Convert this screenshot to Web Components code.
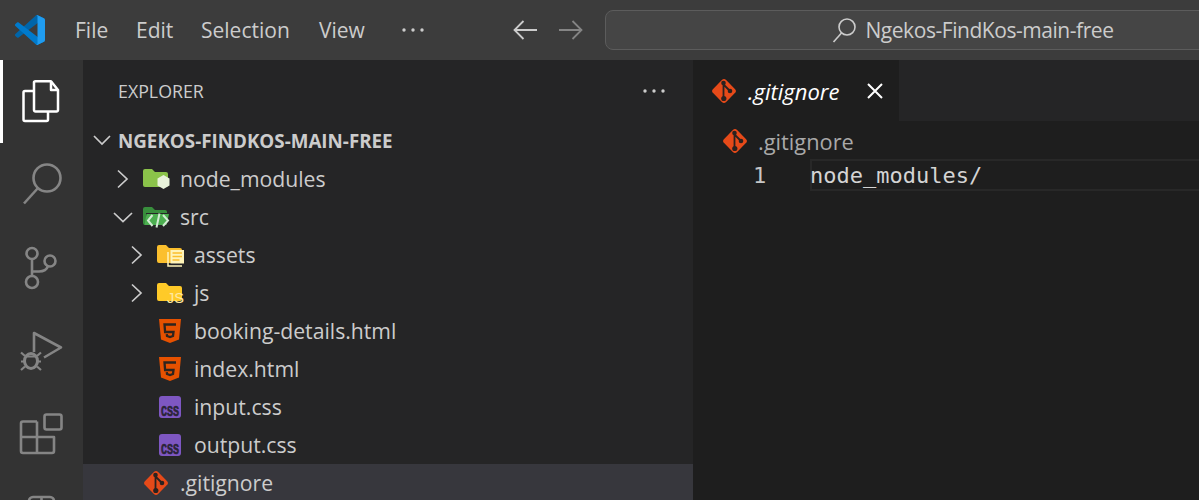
<!DOCTYPE html>
<html>
<head>
<meta charset="utf-8">
<title>Ngekos-FindKos-main-free</title>
<style>
    html, body { margin: 0; height: 500px; overflow: hidden; background: #1e1e1e; }
    body { font-family: "Open Sans", "Liberation Sans", sans-serif; }
</style>
</head>
<body>
<vs-window>
    <vs-titlebar slot="title"></vs-titlebar>
    <vs-activitybar slot="activity"></vs-activitybar>
    <vs-sidebar slot="side">
        <vs-tree-row depth="1" twistie="right" icon="node">node_modules</vs-tree-row>
        <vs-tree-row depth="1" twistie="down" icon="src">src</vs-tree-row>
        <vs-tree-row depth="2" twistie="right" icon="assets">assets</vs-tree-row>
        <vs-tree-row depth="2" twistie="right" icon="js">js</vs-tree-row>
        <vs-tree-row depth="2" icon="html">booking-details.html</vs-tree-row>
        <vs-tree-row depth="2" icon="html">index.html</vs-tree-row>
        <vs-tree-row depth="2" icon="css">input.css</vs-tree-row>
        <vs-tree-row depth="2" icon="css">output.css</vs-tree-row>
        <vs-tree-row depth="1" icon="git" active>.gitignore</vs-tree-row>
    </vs-sidebar>
    <vs-editor slot="editor"></vs-editor>
</vs-window>

<script>
const FOLDER = 'M0 5a2 2 0 0 1 2-2h7l3 3h11a2 2 0 0 1 2 2v11a2 2 0 0 1-2 2H2a2 2 0 0 1-2-2z';

const FILE_ICONS = {
    node: `<path d="${FOLDER}" fill="#8bc34a"/><path d="M20.500 9l6 3.500v7l-6 3.500-6-3.500v-7z" fill="#e8f2da"/>`,
    src: `<path d="M0 5a2 2 0 0 1 2-2h7l3 3h10a2 2 0 0 1 2 2v1H3v12H2a2 2 0 0 1-2-2z" fill="#388e3c"/>
        <path d="M3.500 10H26l-2.500 11H1.500z" fill="#4caf50"/>
        <path d="M9.500 11l-4.500 5.500 4.500 5.500M20 11l5 5.500-5 5.500M16.500 9.500l-3 14" fill="none" stroke="#d3ecd4" stroke-width="2"/>`,
    assets: `<path d="${FOLDER}" fill="#fbbf2d"/>
        <path d="M11 10v14h14" fill="none" stroke="#fff3b8" stroke-width="1.500"/>
        <rect x="13.500" y="8" width="13.500" height="13.500" fill="#fff3b8"/>
        <path d="M15.500 11h9.500M15.500 14.500h9.500M15.500 18h7" stroke="#fbbf2d" stroke-width="1.500"/>`,
    js: `<path d="${FOLDER}" fill="#ffca28"/>
        <text x="10" y="23" font-family="Liberation Sans, sans-serif" font-size="14.500" fill="#ffe9a0">JS</text>`,
    html: `<path d="M2 1h22l-2 20.500L13 25l-9-3.500z" fill="#e65100"/>
        <path d="M19 6.500H7.500l.6 7.500h8.400l-.5 4-3 1-3-1-.2-1.800" fill="none" stroke="#2e241e" stroke-width="2.300"/>`,
    css: `<rect x="2" y="2" width="22" height="22" rx="3" fill="#7e57c2"/>
        <text x="13" y="21.500" text-anchor="middle" font-family="Liberation Mono, monospace" font-weight="700" font-size="14" textLength="18" lengthAdjust="spacingAndGlyphs" fill="#2a2438" stroke="#2a2438" stroke-width=".600">CSS</text>`,
    git: `<rect x="3.800" y="3.800" width="18.400" height="18.400" rx="3" transform="rotate(45 13 13)" fill="#e64a19"/>
        <path d="M12.500 5v15.500M12.500 6.500 19 13" fill="none" stroke="#2a2220" stroke-width="1.800"/>
        <circle cx="12.500" cy="5" r="2.300" fill="#2a2220"/><circle cx="19" cy="13" r="2.300" fill="#2a2220"/><circle cx="12.800" cy="20.500" r="2.600" fill="#2a2220"/>`
};

const fileIcon = name => `<svg width="26" height="26" viewBox="0 0 26 26" style="overflow:visible" aria-hidden="true">${FILE_ICONS[name]}</svg>`;
const dots = `<svg width="24" height="6" viewBox="0 0 24 6"><circle cx="3" cy="3" r="1.700" fill="#ccc"/><circle cx="12" cy="3" r="1.700" fill="#ccc"/><circle cx="21" cy="3" r="1.700" fill="#ccc"/></svg>`;

class VsWindow extends HTMLElement {
    constructor() {
        super();
        this.attachShadow({ mode: 'open' });
        this.shadowRoot.innerHTML = `
        <style>
            :host {
                display: grid;
                grid-template-columns: 83px 610px 1fr;
                grid-template-rows: 60px 440px;
                width: 1199px;
                height: 500px;
                overflow: hidden;
            }
            .title { grid-column: 1 / -1; min-width: 0; overflow: hidden; display: flex; }
        </style>
        <div class="title"><slot name="title"></slot></div>
        <slot name="activity"></slot>
        <slot name="side"></slot>
        <slot name="editor"></slot>
        `;
    }
}

class VsTitlebar extends HTMLElement {
    constructor() {
        super();
        this.attachShadow({ mode: 'open' });
        this.shadowRoot.innerHTML = `
        <style>
            :host {
                display: flex;
                align-items: center;
                flex: none;
                width: 1199px;
                height: 60px;
                background: #3c3c3c;
                color: #cccccc;
                font-size: 21px;
            }
            .logo { flex: none; width: 30px; height: 30px; margin-left: 15px; }
            nav { display: flex; margin-left: 30px; width: 326px; flex: none; align-items: center; }
            nav span { flex: none; }
            .file { width: 61px; } .edit { width: 65px; } .sel { width: 118px; } .view { width: 82px; }
            .more { display: flex; margin-top: -1px; }
            .arrows { display: flex; gap: 22px; margin-left: 112px; flex: none; }
            .box {
                flex: none;
                display: flex;
                align-items: center;
                justify-content: center;
                gap: 9px;
                box-sizing: border-box;
                width: 736px;
                height: 40px;
                margin-left: 22px;
                background: #454545;
                border: 1px solid #5c5c5c;
                border-radius: 8px;
                color: #cccccc;
                letter-spacing: -0.45px;
            }
        </style>
        <svg class="logo" viewBox="0 0 100 100">
            <path fill="#0065a9" d="M96.400 10.800 75.800.9c-2.400-1.100-5.200-.6-7.100 1.200L1.300 63.700c-1.800 1.700-1.800 4.500 0 6.200l5.500 5c1.500 1.300 3.700 1.400 5.300.2L93.300 13.600c2.700-2 6.700-.1 6.700 3.300v-.2c0-2.400-1.400-4.700-3.600-5.900z"/>
            <path fill="#007acc" d="M96.400 89.200 75.800 99.100c-2.400 1.100-5.200.6-7.100-1.200L1.300 36.300c-1.800-1.700-1.800-4.500 0-6.200l5.500-5c1.500-1.300 3.700-1.400 5.300-.2l81.200 61.600c2.700 2 6.700.1 6.700-3.300v.2c0 2.400-1.400 4.700-3.600 5.900z"/>
            <path fill="#1f9cf0" d="M75.800 99.100c-2.400 1.200-5.200.7-7.100-1.200 2.300 2.300 6.300.7 6.300-2.600V4.700c0-3.300-4-4.900-6.300-2.600 1.900-1.900 4.700-2.400 7.100-1.200l20.600 9.900c2.200 1 3.600 3.200 3.600 5.600v67.200c0 2.400-1.400 4.600-3.600 5.600z"/>
        </svg>
        <nav>
            <span class="file">File</span><span class="edit">Edit</span><span class="sel">Selection</span><span class="view">View</span>
            <span class="more">${dots}</span>
        </nav>
        <div class="arrows">
            <svg width="24" height="20" viewBox="0 0 24 20" fill="none" stroke="#cccccc" stroke-width="1.800"><path d="M1 10h23M10.500 1 1.500 10l9 9"/></svg>
            <svg width="24" height="20" viewBox="0 0 24 20" fill="none" stroke="#858585" stroke-width="1.800"><path d="M23 10H0M13.500 1l9 9-9 9"/></svg>
        </div>
        <div class="box">
            <svg width="24" height="26" viewBox="0 0 24 26" fill="none" stroke="#cccccc" stroke-width="1.600"><circle cx="15" cy="10" r="8"/><path d="M9.500 16 1.500 25"/></svg>
            <span>Ngekos-FindKos-main-free</span>
        </div>
        `;
    }
}

class VsActivitybar extends HTMLElement {
    constructor() {
        super();
        this.attachShadow({ mode: 'open' });
        const stroke = 'fill="none" stroke="#858585" stroke-width="2.600" stroke-linejoin="round"';
        this.shadowRoot.innerHTML = `
        <style>
            :host {
                display: flex;
                flex-direction: column;
                height: 440px;
                background: #333333;
                overflow: hidden;
            }
            svg { flex: none; display: block; width: 83px; height: 83px; }
            .on { box-shadow: inset 3px 0 0 #ffffff; }
        </style>
        <svg class="on" viewBox="0 0 83 83" fill="none" stroke="#ffffff" stroke-width="2.500" stroke-linejoin="round">
            <path d="M34 22V50a1.500 1.500 0 0 0 1.500 1.500H56.500A1.500 1.500 0 0 0 58 50V30l-7-8.800H35.500A1.500 1.500 0 0 0 34 22.700z"/>
            <path d="M51 21.200V30h7"/>
            <path d="M33.500 31H25a1.500 1.500 0 0 0-1.500 1.500V59.500A1.500 1.500 0 0 0 25 61H46.500A1.500 1.500 0 0 0 48 59.500V52"/>
        </svg>
        <svg viewBox="0 0 83 83" ${stroke}>
            <circle cx="47" cy="35" r="13.500"/>
            <path d="M38 45 24 60.500"/>
        </svg>
        <svg viewBox="0 0 83 83" ${stroke}>
            <circle cx="32" cy="27.500" r="5.500"/>
            <circle cx="32" cy="56" r="6"/>
            <circle cx="50" cy="35" r="5.500"/>
            <path d="M32 33v17M32 45.500h7c5 0 8-2.500 9-5.500"/>
        </svg>
        <svg viewBox="0 0 83 83" ${stroke}>
            <path d="M34 43V24L61 38.500 44 48.500"/>
            <ellipse cx="31" cy="52" rx="6.500" ry="7.500" stroke-width="3"/>
            <path d="M25 47.500h12M21 43.500l4 3.500M41 43.500l-4 3.500M21 52.500h3M38 52.500h3M21 61l4-3.500M41 61l-4-3.500" stroke-width="2.200"/>
        </svg>
        <svg viewBox="0 0 83 83" ${stroke}>
            <rect x="44.500" y="22.500" width="17" height="15" rx="2"/>
            <path d="M37 29.500H23a2 2 0 0 0-2 2V59a2 2 0 0 0 2 2H52a2 2 0 0 0 2-2V45H21M37 29.500V61"/>
        </svg>
        <svg viewBox="0 0 83 83" ${stroke}>
            <path d="M29 30v-4a4 4 0 0 1 4-4H50a4 4 0 0 1 4 4v4M41.500 22v10"/>
        </svg>
        `;
    }
}

class VsSidebar extends HTMLElement {
    constructor() {
        super();
        this.attachShadow({ mode: 'open' });
        this.shadowRoot.innerHTML = `
        <style>
            :host {
                display: flex;
                flex-direction: column;
                height: 440px;
                background: #252526;
                color: #cccccc;
                overflow: hidden;
            }
            header {
                display: flex;
                align-items: center;
                justify-content: space-between;
                flex: none;
                height: 62px;
                padding: 0 27px 0 35px;
                font-size: 17.800px;
            }
            .root {
                display: flex;
                align-items: center;
                flex: none;
                height: 38px;
                padding-left: 10px;
                gap: 13px;
                font-size: 18.800px;
                font-weight: 700;
            }
            .root svg { margin-top: -2px; }
        </style>
        <header><span>EXPLORER</span>${dots}</header>
        <div class="root">
            <svg width="12" height="18" viewBox="0 0 18 18" style="width:18px;margin-right:-6px" fill="none" stroke="#cccccc" stroke-width="1.700"><path d="M1 5l8 8 8-8"/></svg>
            <span>NGEKOS-FINDKOS-MAIN-FREE</span>
        </div>
        <slot></slot>
        `;
    }
}

class VsTreeRow extends HTMLElement {
    constructor() {
        super();
        this.attachShadow({ mode: 'open' });
        const twistie = this.getAttribute('twistie');
        const depth = Number(this.getAttribute('depth') || 1);
        let chevron = '';
        if (twistie === 'right') {
            chevron = '<path d="M1 .5l9 8.500-9 8.500"/>';
        } else if (twistie === 'down') {
            chevron = '<path d="M-1 5l9 8.500 9-8.500"/>';
        }
        this.shadowRoot.innerHTML = `
        <style>
            :host {
                display: flex;
                align-items: center;
                flex: none;
                box-sizing: border-box;
                height: 38px;
                padding-left: ${24 + (depth - 1) * 14}px;
                font-size: 21.200px;
                color: #cccccc;
            }
            :host([active]) { background: #37373d; }
            .twistie { flex: none; width: 36px; display: flex; padding-left: ${twistie === 'down' ? 8 : 10}px; box-sizing: border-box; }
            .twistie svg { overflow: visible; }
            .icon { flex: none; display: flex; margin-right: 11px; }
            .label { margin-top: -2px; }
        </style>
        <span class="twistie"><svg width="14" height="18" viewBox="0 0 14 18" fill="none" stroke="#cccccc" stroke-width="1.700">${chevron}</svg></span>
        <span class="icon">${fileIcon(this.getAttribute('icon'))}</span>
        <span class="label"><slot></slot></span>
        `;
    }
}

class VsEditor extends HTMLElement {
    constructor() {
        super();
        this.attachShadow({ mode: 'open' });
        this.shadowRoot.innerHTML = `
        <style>
            :host {
                display: flex;
                flex-direction: column;
                height: 440px;
                background: #1e1e1e;
                overflow: hidden;
            }
            .tabs { display: flex; flex: none; height: 61px; background: #252526; }
            .tab {
                display: flex;
                align-items: center;
                box-sizing: border-box;
                width: 206px;
                padding-left: 18px;
                background: #1e1e1e;
                color: #ffffff;
                font-size: 22px;
                font-style: italic;
            }
            .tab .name { margin-left: 11px; width: 119px; flex: none; }
            .tab svg { flex: none; }
            .crumbs {
                display: flex;
                align-items: center;
                flex: none;
                height: 38px;
                margin-top: 1px;
                padding-left: 29px;
                gap: 10px;
                font-size: 21.800px;
                color: #a9a9a9;
            }
            .line { display: flex; flex: none; height: 32px; margin-top: -1px; }
            .num {
                flex: none;
                box-sizing: border-box;
                width: 117px;
                padding-left: 60px;
                color: #c6c6c6;
                font: 22px/34px "DejaVu Sans Mono", monospace;
            }
            .code {
                flex: 1;
                box-sizing: border-box;
                height: 32px;
                border: 2px solid #282828;
                border-right: 0;
                color: #d4d4d4;
                font: 22px/30px "DejaVu Sans Mono", monospace;
                text-indent: -2px;
                white-space: pre;
            }
        </style>
        <div class="tabs">
            <div class="tab">
                ${fileIcon('git')}
                <span class="name">.gitignore</span>
                <svg width="16" height="16" viewBox="0 0 16 16" fill="none" stroke="#ffffff" stroke-width="2"><path d="M1 1l14 14M15 1 1 15"/></svg>
            </div>
        </div>
        <div class="crumbs">${fileIcon('git')}<span>.gitignore</span></div>
        <div class="line"><span class="num">1</span><span class="code">node_modules/</span></div>
        `;
    }
}

customElements.define('vs-window', VsWindow);
customElements.define('vs-titlebar', VsTitlebar);
customElements.define('vs-activitybar', VsActivitybar);
customElements.define('vs-sidebar', VsSidebar);
customElements.define('vs-tree-row', VsTreeRow);
customElements.define('vs-editor', VsEditor);
</script>
</body>
</html>
